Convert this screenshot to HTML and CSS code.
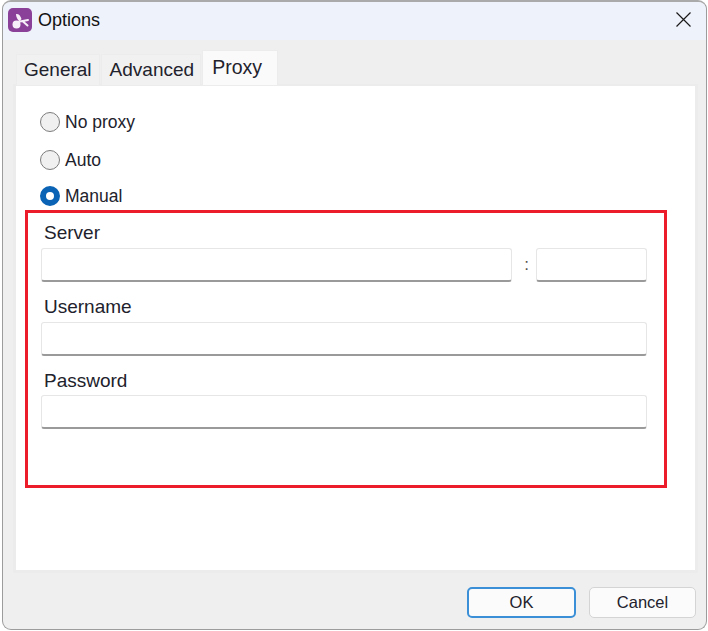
FILE: index.html
```html
<!DOCTYPE html>
<html>
<head>
	<meta charset="utf-8">
	<title>Options</title>
	<link rel="stylesheet" href="styles.css">
</head>
<body>
	<div class="dialog">
		<div class="titlebar">
			<svg class="app-icon" width="24" height="24" viewBox="0 0 24 24">
				<rect width="24" height="24" rx="5" fill="#8a3f98"/>
				<circle cx="8.500" cy="16.500" r="4" fill="#f6eef8"/>
				<path d="M8 6c2.500-.5 4.500 1.500 5.500 5l-2 2.500C9.500 12 8 9 8 6z" fill="#f6eef8"/>
				<path d="M12 13.500l8-1.500M15 13.500l4.500 4" stroke="#f6eef8" stroke-width="2" stroke-linecap="round" fill="none"/>
			</svg>
			<span class="title">Options</span>
			<svg class="close" width="15" height="15" viewBox="0 0 15 15">
				<path d="M.5.500l14 14M14.500.500l-14 14" stroke="#1a1a1a" stroke-width="1.200" fill="none"/>
			</svg>
		</div>

		<div class="content">
			<div class="tabs">
				<div class="tab">General</div>
				<div class="tab">Advanced</div>
				<div class="tab active">Proxy</div>
			</div>

			<div class="pane">
				<label class="radio"><span class="dot"></span>No proxy</label>
				<label class="radio"><span class="dot"></span>Auto</label>
				<label class="radio"><span class="dot checked"></span>Manual</label>

				<div class="proxy-fields">
					<div class="field-label">Server</div>
					<div class="server-row">
						<div class="input grow"></div>
						<span class="colon">:</span>
						<div class="input port"></div>
					</div>
					<div class="field-label">Username</div>
					<div class="input"></div>
					<div class="field-label short">Password</div>
					<div class="input"></div>
				</div>
			</div>

			<div class="buttons">
				<button class="btn default">OK</button>
				<button class="btn cancel">Cancel</button>
			</div>
		</div>
	</div>
</body>
</html>
```

FILE: styles.css
```css
html, body {
	margin: 0;
	height: 100%;
	background: #fff;
	overflow: hidden;
}

body {
	padding-left: 2px;
	box-sizing: border-box;
	font-family: "Liberation Sans", Arial, sans-serif;
	font-size: 19px;
	color: #22222c;
}

.dialog {
	width: 705px;
	height: 630px;
	box-sizing: border-box;
	border: 1px solid #9c9c9c;
	border-top: 2px solid #aaa;
	border-radius: 9px;
	background: #efefef;
	display: flex;
	flex-direction: column;
	overflow: hidden;
}

.titlebar {
	height: 38px;
	box-sizing: border-box;
	flex: none;
	background: #eef2fb;
	display: flex;
	align-items: center;
	padding: 0 15px 2px 5px;
}

.app-icon {
	flex: none;
}

.title {
	margin-left: 6px;
	font-size: 18px;
	color: #111;
	flex: 1;
}

.close {
	margin-bottom: 2px;
}

.content {
	flex: 1;
	display: flex;
	flex-direction: column;
	padding: 11px 8px 0 10px;
}

.tabs {
	display: flex;
	padding-left: 3px;
	height: 34px;
	align-items: flex-end;
	position: relative;
	z-index: 1;
}

.tab {
	height: 31px;
	padding: 0 7px;
	margin-right: 1px;
	line-height: 30px;
	background: #f1f1f1;
	border: 1px solid #ececec;
	border-bottom: 0;
	box-sizing: border-box;
}

.tab:nth-child(2) {
	padding: 0 6px 0 8px;
}

.tab.active {
	height: 35px;
	line-height: 32px;
	font-size: 19.500px;
	background: #fafafa;
	padding: 0 15px 0 9px;
}

.pane {
	height: 489px;
	box-sizing: border-box;
	background: #fff;
	border: 3px solid #ececec;
	border-width: 2px 3px 3px 3px;
	padding: 24px 9px 0 9px;
	margin-top: -1px;
}

.radio {
	display: flex;
	align-items: center;
	height: 24px;
	margin-bottom: 14px;
	margin-left: 15px;
	font-size: 17.500px;
}

.radio:nth-child(2) {
	margin-bottom: 12px;
}

.radio:nth-child(3) {
	margin-bottom: 2px;
}

.dot {
	width: 20px;
	height: 20px;
	box-sizing: border-box;
	border: 1.500px solid #7c7c7c;
	border-radius: 50%;
	background: #f0f0f0;
	margin-right: 5px;
}

.dot.checked {
	border: 6px solid #0a63b4;
	background: #fff;
}

.proxy-fields {
	width: 642px;
	height: 278px;
	box-sizing: border-box;
	border: 3px solid #ed1c2a;
	padding: 9px 17px 0 13px;
}

.field-label {
	height: 26px;
	line-height: 22px;
	padding-left: 3px;
}

.field-label.short {
	height: 25px;
}

.server-row {
	display: flex;
	align-items: center;
}

.input {
	height: 34px;
	box-sizing: border-box;
	background: #fff;
	border: 1px solid #e6e6e6;
	border-bottom: 2px solid #9a9a9a;
	border-radius: 3px;
	margin-bottom: 14px;
}

.grow {
	flex: 1;
}

.port {
	width: 111px;
}

.colon {
	width: 24px;
	box-sizing: border-box;
	padding-left: 5px;
	text-align: center;
	margin-bottom: 14px;
	font-size: 17px;
	color: #55504a;
}

.buttons {
	display: flex;
	justify-content: flex-end;
	gap: 13px;
	padding: 14px 2px 0 0;
}

.btn {
	width: 109px;
	height: 31px;
	font: inherit;
	font-size: 16.500px;
	color: #22222c;
	background: #fbfbfb;
	border: 1.500px solid #d4d4d4;
	border-radius: 5px;
	padding: 0;
}

.btn.cancel {
	width: 107px;
}

.btn.default {
	border: 2px solid #3b8fd6;
}
```
